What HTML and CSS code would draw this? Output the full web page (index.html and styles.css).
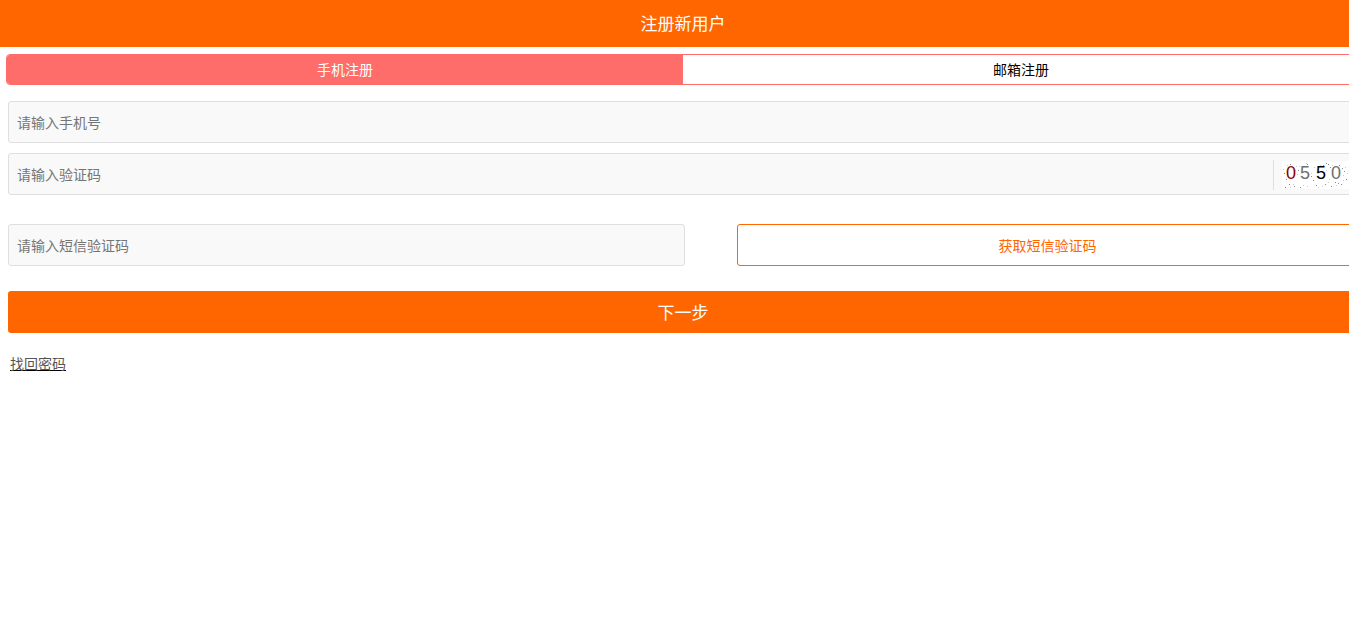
FILE: index.html
```html
<!DOCTYPE html>
<html lang="zh-CN">
<head>
<meta charset="utf-8">
<title>注册新用户</title>
<link rel="stylesheet" href="styles.css">
</head>
<body>
<div class="page">
  <header class="header"><h1 class="title">注册新用户</h1></header>
  <nav class="tabs">
    <button class="tab tab-active" type="button">手机注册</button>
    <button class="tab" type="button">邮箱注册</button>
  </nav>
  <form class="form">
    <input class="field" type="tel" placeholder="请输入手机号" aria-label="手机号">
    <div class="field captcha-row">
      <input class="captcha-input" type="text" placeholder="请输入验证码" aria-label="验证码">
      <div class="captcha">
        <svg width="70" height="28" viewBox="0 0 70 28" role="img" aria-label="验证码图片">
          <rect width="70" height="28" fill="#fff"/>
          <path class="noise" d="M8 3h1M2 12h1M4 18h1M3 26h1M7 23h1M12 25h1M16 9h1M18 26h1M25 3h1M34 24h1M41 4h1M44 2h1M46 3h1M43 23h1M49 25h1M53 21h1M56 22h1M59 23h1M57 4h1M60 7h1M48 6h1M62 10h1M64 18h1M67 15h1M29 15h1M31 19h1"/>
          <path class="noise noise-light" d="M5 4h1M1 8h1M6 7h1M8 26h1M11 23h1M14 5h1M13 9h1M17 5h1M21 24h1M25 25h1M29 12h1M32 6h1M36 26h1M40 25h1M44 9h1M46 21h1M50 4h1M54 24h1M61 14h1M63 6h1M65 12h1M47 18h1M15 13h1M24 2h1M38 4h1M68 24h1M61 19h1"/>
          <text class="digit digit-red" x="4" y="18">0</text>
          <text class="digit digit-gray" x="18" y="18">5</text>
          <text class="digit digit-black" x="34" y="18">5</text>
          <text class="digit digit-gray" x="49" y="18">0</text>
        </svg>
      </div>
    </div>
    <div class="sms-row">
      <input class="field" type="text" placeholder="请输入短信验证码" aria-label="短信验证码">
      <button class="sms-button" type="button">获取短信验证码</button>
    </div>
    <button class="next" type="button">下一步</button>
    <a class="recover" href="#">找回密码</a>
  </form>
</div>
</body>
</html>
```
FILE: styles.css
```css
* {
  box-sizing: border-box;
}

body {
  margin: 0;
  background: #fff;
  color: #000;
  font: 14px/20px "Liberation Sans", "Noto Sans CJK SC", sans-serif;
  overflow: hidden;
}

button,
input {
  margin: 0;
  font: inherit;
}

/* The page runs on beneath the right edge of the window. */
.page {
  width: calc(100% + 17px);
}

.header {
  display: flex;
  align-items: center;
  justify-content: center;
  height: 47px;
  padding-top: 2px;
  background: #ff6600;
  color: #fff;
}

.title {
  margin: 0;
  font-size: 17px;
  font-weight: 400;
  line-height: 24px;
}

.tabs {
  display: flex;
  height: 31px;
  margin: 7px 6px 16px;
  border: 1px solid #ff6d6b;
  border-radius: 4px;
  overflow: hidden;
}

.tab {
  flex: 1;
  padding: 0;
  border: 0;
  background: #fff;
  color: #000;
}

.tab-active {
  background: #ff6d6b;
  color: #fff;
}

.form {
  display: flex;
  flex-direction: column;
  padding: 0 8px;
}

.field {
  min-width: 0;
  height: 42px;
  padding: 2px 8px 0;
  border: 1px solid #dfdfdf;
  border-radius: 3px;
  background: #f9f9f9;
  color: #000;
}

::placeholder {
  color: #757575;
  opacity: 1;
}

.captcha-row {
  display: flex;
  align-items: center;
  margin-top: 10px;
  padding-right: 5px;
}

.captcha-input {
  flex: 1;
  min-width: 0;
  height: 38px;
  padding: 0;
  border: 0;
  background: transparent;
}

.captcha {
  display: flex;
  align-items: center;
  height: 30px;
  padding-left: 8px;
  border-left: 1px solid #dfdfdf;
}

.digit {
  font: 18px "Liberation Sans", sans-serif;
}

.digit-red {
  fill: #8b0000;
}

.digit-gray {
  fill: #707070;
}

.digit-black {
  fill: #000;
}

.noise {
  stroke: #888;
  fill: none;
  shape-rendering: crispEdges;
}

.noise-light {
  stroke: #ccc;
}

.sms-row {
  display: grid;
  grid-template-columns: 12fr 11fr;
  gap: 52px;
  margin: 29px 0 25px;
}

.sms-button {
  height: 42px;
  padding: 2px 0 0;
  border: 1px solid #ff6600;
  border-radius: 3px;
  background: #fff;
  color: #ff6600;
}

.next {
  height: 42px;
  padding: 3px 0 0;
  border: 0;
  border-radius: 3px;
  background: #ff6600;
  color: #fff;
  font-size: 17px;
}

.recover {
  align-self: flex-start;
  margin: 21px 2px 0;
  color: #555;
  text-decoration: underline #000;
}
```
